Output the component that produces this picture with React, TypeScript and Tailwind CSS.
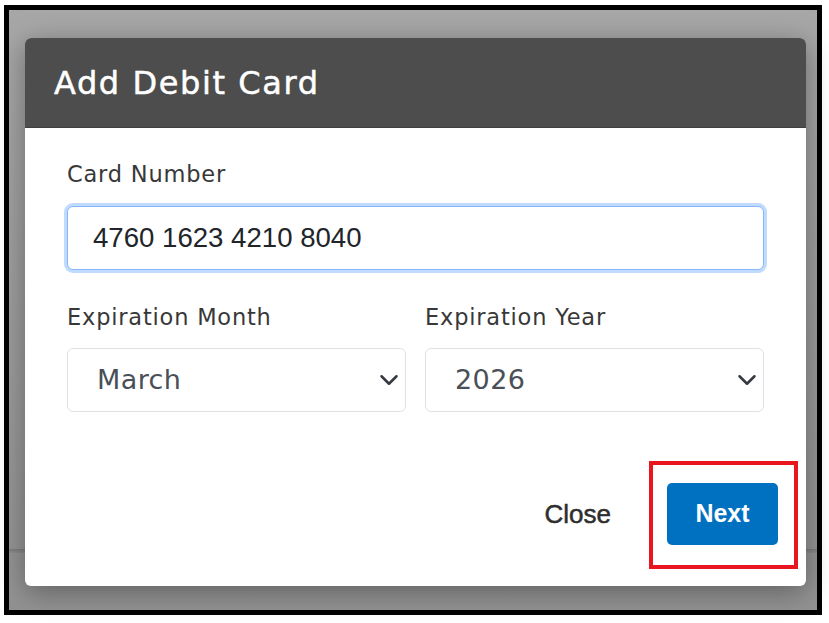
import React from 'react';

function Chevron() {
  return (
    <svg width="20" height="20" viewBox="0 0 16 16" fill="none" className="shrink-0">
      <path d="m2 5 6 6 6-6" stroke="#343a40" strokeWidth="2" strokeLinecap="round" strokeLinejoin="round" />
    </svg>
  );
}

const uiFont = { fontFamily: '"DejaVu Sans", "Open Sans", sans-serif' };

function SelectBox({ value }: { value: string }) {
  return (
    <div className="flex h-[64px] items-center justify-between rounded-[6px] border border-[#dee2e6] bg-white pl-[29px] pr-[6px]">
      <span className="text-[27px] tracking-[0.4px] text-[#495057]" style={uiFont}>
        {value}
      </span>
      <Chevron />
    </div>
  );
}

export default function App() {
  return (
    <div className="min-h-screen bg-white pl-[4px] pt-[5px]">
      <div className="h-[610px] w-[818px] border-[5px] border-black">
        <div className="relative h-full w-full bg-gradient-to-b from-[#a7a7a7] to-[#929292] pl-[16px] pt-[28px]">
          {/* page behind the backdrop */}
          <div className="absolute left-0 right-0 top-[539px] h-[4px] bg-gradient-to-b from-[#7c7c7c] to-[#8e8e8e]" />

          {/* Modal */}
          <div className="relative flex h-[548px] w-[781px] flex-col rounded-[6px] bg-white shadow-[0_6px_28px_rgba(0,0,0,0.35)]">
            <div className="flex h-[90px] items-center rounded-t-[6px] border-b border-[#3f3f3f] bg-[#4d4d4d] pl-[29px]">
              <h2 className="text-[32px] tracking-[1.6px] text-white [-webkit-text-stroke:0.5px_#ffffff]" style={uiFont}>
                Add Debit Card
              </h2>
            </div>

            <div className="px-[42px] pt-[30px]" style={uiFont}>
              <label className="block text-[22.5px] leading-[33px] tracking-[0.8px] text-[#383838]">Card Number</label>
              <input
                readOnly
                value="4760 1623 4210 8040"
                className="mt-[15px] h-[64px] w-full rounded-[6px] border border-[#86b7fe] bg-white pl-[25px] text-[27.6px] text-[#212529] shadow-[0_0_0_3px_#c0dbfd] outline-none"
                style={{ fontFamily: '"Liberation Sans", Arial, sans-serif' }}
              />

              <div className="mt-[31px] grid grid-cols-2 gap-[19px]">
                <div>
                  <label className="block text-[22.5px] leading-[33px] tracking-[0.8px] text-[#383838]">Expiration Month</label>
                  <div className="mt-[14px]">
                    <SelectBox value="March" />
                  </div>
                </div>
                <div>
                  <label className="block text-[22.5px] leading-[33px] tracking-[0.8px] text-[#383838]">Expiration Year</label>
                  <div className="mt-[14px]">
                    <SelectBox value="2026" />
                  </div>
                </div>
              </div>
            </div>

            {/* Footer */}
            <div className="mt-[71px] flex items-center justify-end pr-[28px]">
              <button
                className="mr-[40px] px-[16px] text-[26px] text-[#2e2e2e] [-webkit-text-stroke:0.5px_#2e2e2e]"
                style={{ fontFamily: '"Liberation Sans", Arial, sans-serif' }}
              >
                Close
              </button>
              <span className="relative">
                <button
                  className="h-[62px] w-[111px] rounded-[5px] bg-[#0070c0] text-[25px] font-bold text-white"
                  style={{ fontFamily: '"Liberation Sans", Arial, sans-serif' }}
                >
                  Next
                </button>
                <span className="pointer-events-none absolute -bottom-[24px] -left-[18px] -right-[20px] -top-[22px] border-[4px] border-[#e8161f]" />
              </span>
            </div>
          </div>
        </div>
      </div>
    </div>
  );
}
